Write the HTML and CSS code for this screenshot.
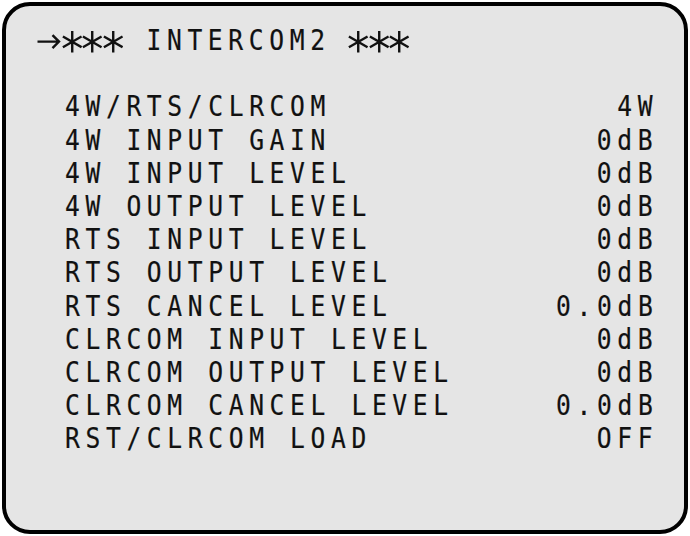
FILE: index.html
```html
<!DOCTYPE html>
<html lang="en">
  <head>
    <meta charset="UTF-8" />
    <meta name="viewport" content="width=device-width, initial-scale=1.0" />
    <title>INTERCOM2</title>
    <link rel="stylesheet" href="styles.css">
  </head>
  <body>
    <div class="screen">
      <div class="title">
        <svg class="cell arrow" width="24" height="33" viewBox="0 0 24 33">
          <path d="M0.5 17.5 H22 M15.5 11 L22 17.5 L15.5 24" fill="none" stroke="#111" stroke-width="2.4" />
        </svg>
        <svg class="cell" width="20.46" height="33" viewBox="0 0 20.46 33">
          <path d="M10.23 7 V28.5 M0.9 12.4 L19.56 23.1 M0.9 23.1 L19.56 12.4" stroke="#111" stroke-width="2.4" />
        </svg>
        <svg class="cell" width="20.46" height="33" viewBox="0 0 20.46 33">
          <path d="M10.23 7 V28.5 M0.9 12.4 L19.56 23.1 M0.9 23.1 L19.56 12.4" stroke="#111" stroke-width="2.4" />
        </svg>
        <svg class="cell" width="20.46" height="33" viewBox="0 0 20.46 33">
          <path d="M10.23 7 V28.5 M0.9 12.4 L19.56 23.1 M0.9 23.1 L19.56 12.4" stroke="#111" stroke-width="2.4" />
        </svg>
        <span class="heading"><span class="txt"> INTERCOM2 </span></span>
        <svg class="cell" width="20.46" height="33" viewBox="0 0 20.46 33">
          <path d="M10.23 7 V28.5 M0.9 12.4 L19.56 23.1 M0.9 23.1 L19.56 12.4" stroke="#111" stroke-width="2.4" />
        </svg>
        <svg class="cell" width="20.46" height="33" viewBox="0 0 20.46 33">
          <path d="M10.23 7 V28.5 M0.9 12.4 L19.56 23.1 M0.9 23.1 L19.56 12.4" stroke="#111" stroke-width="2.4" />
        </svg>
        <svg class="cell" width="20.46" height="33" viewBox="0 0 20.46 33">
          <path d="M10.23 7 V28.5 M0.9 12.4 L19.56 23.1 M0.9 23.1 L19.56 12.4" stroke="#111" stroke-width="2.4" />
        </svg>
      </div>
      <div class="menu">
        <div class="row"><span class="label">4W/RTS/CLRCOM</span><span class="value">4W</span></div>
        <div class="row"><span class="label">4W INPUT GAIN</span><span class="value">0dB</span></div>
        <div class="row"><span class="label">4W INPUT LEVEL</span><span class="value">0dB</span></div>
        <div class="row"><span class="label">4W OUTPUT LEVEL</span><span class="value">0dB</span></div>
        <div class="row"><span class="label">RTS INPUT LEVEL</span><span class="value">0dB</span></div>
        <div class="row"><span class="label">RTS OUTPUT LEVEL</span><span class="value">0dB</span></div>
        <div class="row"><span class="label">RTS CANCEL LEVEL</span><span class="value">0.0dB</span></div>
        <div class="row"><span class="label">CLRCOM INPUT LEVEL</span><span class="value">0dB</span></div>
        <div class="row"><span class="label">CLRCOM OUTPUT LEVEL</span><span class="value">0dB</span></div>
        <div class="row"><span class="label">CLRCOM CANCEL LEVEL</span><span class="value">0.0dB</span></div>
        <div class="row"><span class="label">RST/CLRCOM LOAD</span><span class="value">OFF</span></div>
      </div>
    </div>
  </body>
</html>
```

FILE: styles.css
```css
html,
body {
  margin: 0;
  background: #ffffff;
}

/* character grid: 20.46px pitch, 33.2px rows */
.screen {
  box-sizing: border-box;
  width: 686px;
  height: 532px;
  margin: 2px;
  border: 4px solid #000;
  border-radius: 28px;
  background-color: #e5e5e5;
  color: #111;
  padding: 18px 26px 0 35.3px;
  font-family: "DejaVu Sans Mono", "Liberation Mono", monospace;
  font-size: 29px;
  line-height: 33.2px;
  letter-spacing: 6.61px;
  -webkit-text-stroke: 0.2px #111;
}

.title {
  display: flex;
  align-items: flex-start;
  height: 33.2px;
  margin-bottom: 33.2px;
}

.cell {
  flex: none;
  width: 20.46px;
  height: 33.2px;
  display: block;
}

.arrow {
  width: 24px;
  margin-left: -4px;
  margin-right: 0.46px;
}

.heading {
  flex: none;
  width: 225.06px;
  padding-left: 2.8px;
  box-sizing: border-box;
  white-space: pre;
}

.txt,
.label,
.value {
  display: inline-block;
  white-space: pre;
  transform: scaleX(0.85);
  transform-origin: left center;
}

.value {
  transform-origin: right center;
}

.row {
  display: flex;
  justify-content: space-between;
  padding-left: 23.26px;
  height: 33.2px;
}
```
